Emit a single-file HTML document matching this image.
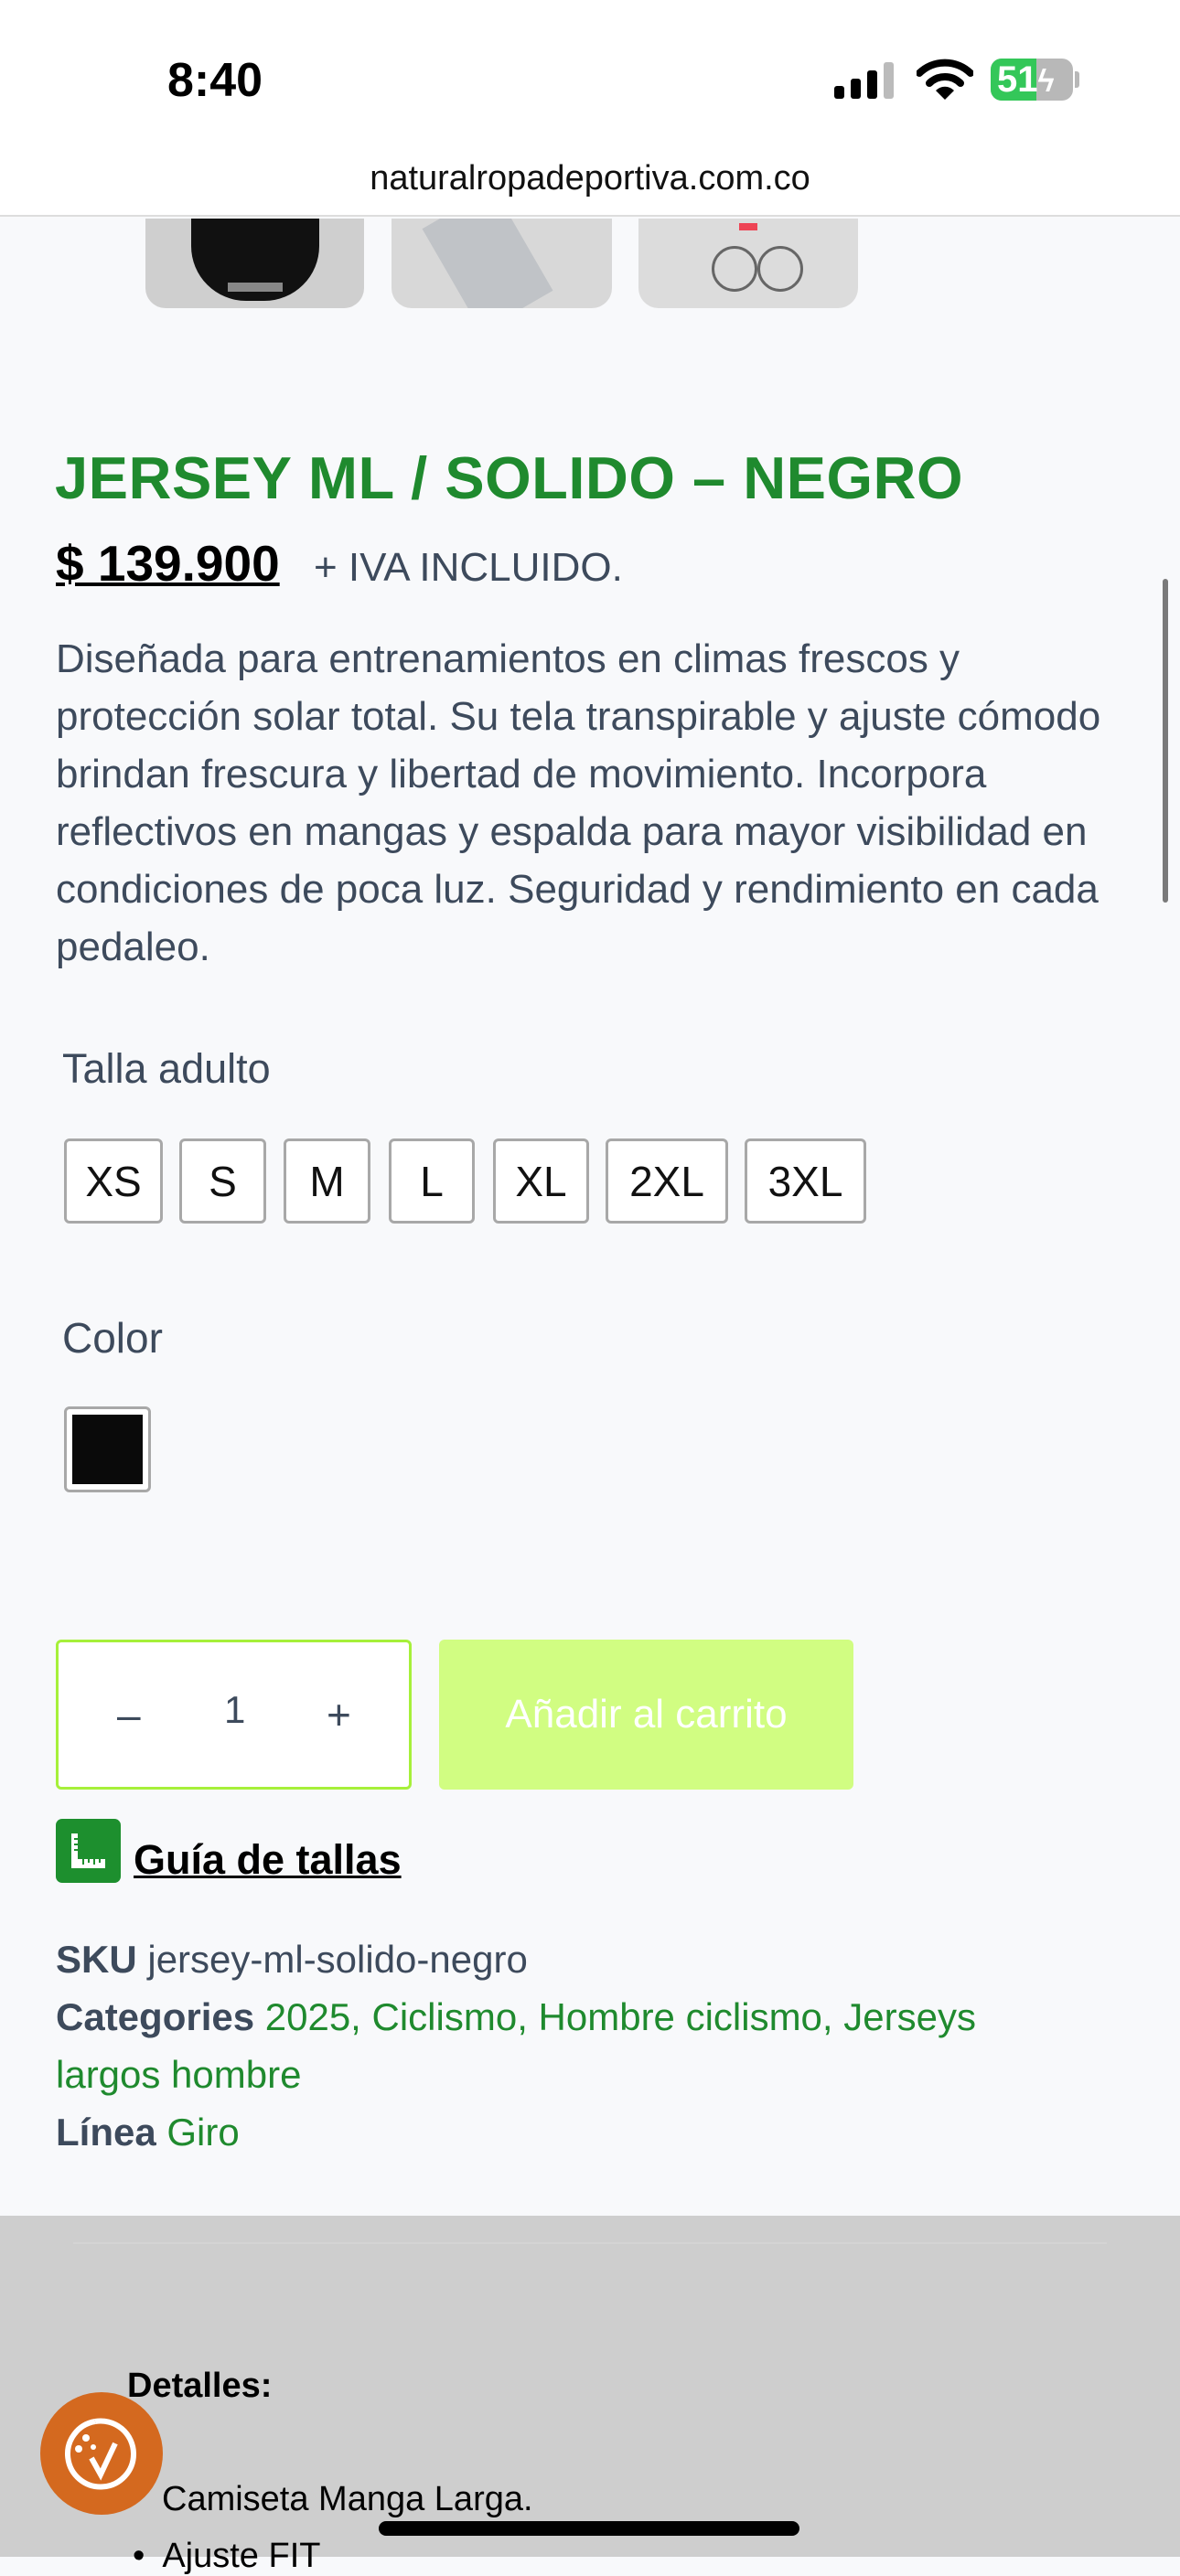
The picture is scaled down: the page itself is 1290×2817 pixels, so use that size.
<!DOCTYPE html>
<html><head><meta charset="utf-8"><style>
*{margin:0;padding:0;box-sizing:border-box}
body{width:1290px;height:2796px;overflow:hidden;background:#f8f9fb;font-family:"Liberation Sans",sans-serif;position:relative}
.a{position:absolute;white-space:nowrap}
.sz{position:absolute;top:1245px;height:93px;border:3px solid #a8a8a8;border-radius:6px;background:#fff;font-size:46px;color:#111;display:flex;align-items:center;justify-content:center}
.d{font-size:44px;color:#3d4a5c;left:61px}
.m{font-size:42px;color:#3d4a5c;left:61px}
.g{color:#1f8a2e}
</style></head><body>
<div class="a" style="left:0;top:0;width:1290px;height:237px;background:#fff;border-bottom:2px solid #ddd"></div>
<div class="a" style="left:183px;top:58px;font-size:52px;font-weight:bold;color:#000">8:40</div>
<svg class="a" style="left:912px;top:68px" width="70" height="40"><rect x="0" y="26" width="11" height="14" rx="3"/><rect x="18" y="18" width="11" height="22" rx="3"/><rect x="36" y="9" width="11" height="31" rx="3"/><rect x="54" y="0" width="11" height="40" rx="3" fill="#bbb"/></svg>
<svg class="a" style="left:1002px;top:64px" width="62" height="46" viewBox="0 0 62 46"><path d="M3 16 A40 40 0 0 1 59 16" stroke="#000" stroke-width="8" fill="none" stroke-linecap="round"/><path d="M14 27 A24 24 0 0 1 48 27" stroke="#000" stroke-width="8" fill="none" stroke-linecap="round"/><path d="M31 45 L21 35 A14 14 0 0 1 41 35 Z"/></svg>
<div class="a" style="left:1083px;top:64px;width:90px;height:46px;border-radius:12px;background:#b8b8b8;overflow:hidden"><div style="width:50px;height:46px;background:#34c759"></div></div>
<div class="a" style="left:1090px;top:64px;font-size:40px;font-weight:bold;color:#fff;line-height:46px">51<span style="font-size:34px">ϟ</span></div>
<div class="a" style="left:1175px;top:78px;width:5px;height:18px;background:#b8b8b8;border-radius:0 3px 3px 0"></div>
<div class="a" style="left:0;width:1290px;top:174px;text-align:center;font-size:38px;color:#111">naturalropadeportiva.com.co</div>

<div class="a" style="left:159px;top:239px;width:239px;height:98px;background:#cfcfcf;border-radius:0 0 22px 22px;overflow:hidden"><div style="position:absolute;left:50px;top:0;width:140px;height:90px;background:#111;border-radius:0 0 60px 60px"></div><div style="position:absolute;left:90px;top:70px;width:60px;height:10px;background:#888"></div></div>
<div class="a" style="left:428px;top:239px;width:241px;height:98px;background:#d8d8d8;border-radius:0 0 22px 22px;overflow:hidden"><div style="position:absolute;left:60px;top:-20px;width:90px;height:130px;background:#c0c3c7;transform:rotate(-30deg)"></div></div>
<div class="a" style="left:698px;top:239px;width:240px;height:98px;background:#dcdcdc;border-radius:0 0 22px 22px;overflow:hidden"><div style="position:absolute;left:80px;top:30px;width:50px;height:50px;border:3px solid #666;border-radius:50%"></div><div style="position:absolute;left:130px;top:30px;width:50px;height:50px;border:3px solid #666;border-radius:50%"></div><div style="position:absolute;left:110px;top:5px;width:20px;height:8px;background:#e45"></div></div>

<div class="a" style="left:60px;top:485px;font-size:65px;font-weight:bold;color:#1f8a2e;letter-spacing:0.5px">JERSEY ML / SOLIDO – NEGRO</div>
<div class="a" style="left:61px;top:584px;font-size:55px;font-weight:bold;color:#000;text-decoration:underline;text-decoration-thickness:4px">$ 139.900</div>
<div class="a" style="left:343px;top:596px;font-size:44px;color:#3d4a5c">+ IVA INCLUIDO.</div>

<div class="a d" style="top:696px">Diseñada para entrenamientos en climas frescos y</div>
<div class="a d" style="top:759px">protección solar total. Su tela transpirable y ajuste cómodo</div>
<div class="a d" style="top:822px">brindan frescura y libertad de movimiento. Incorpora</div>
<div class="a d" style="top:885px">reflectivos en mangas y espalda para mayor visibilidad en</div>
<div class="a d" style="top:948px">condiciones de poca luz. Seguridad y rendimiento en cada</div>
<div class="a d" style="top:1011px">pedaleo.</div>

<div class="a" style="left:68px;top:1143px;font-size:45px;color:#3d4a5c">Talla adulto</div>
<div class="sz" style="left:70px;width:108px">XS</div>
<div class="sz" style="left:196px;width:95px">S</div>
<div class="sz" style="left:310px;width:95px">M</div>
<div class="sz" style="left:425px;width:94px">L</div>
<div class="sz" style="left:539px;width:105px">XL</div>
<div class="sz" style="left:662px;width:134px">2XL</div>
<div class="sz" style="left:814px;width:133px">3XL</div>
<div class="a" style="left:68px;top:1436px;font-size:46px;color:#3d4a5c">Color</div>
<div class="a" style="left:70px;top:1538px;width:95px;height:94px;border:3px solid #a8a8a8;border-radius:6px;background:#fff;padding:6px"><div style="width:100%;height:100%;background:#0a0a0a"></div></div>

<div class="a" style="left:61px;top:1793px;width:389px;height:164px;border:3px solid #a6f03a;border-radius:6px;background:#fff"></div>
<div class="a" style="left:128px;top:1848px;font-size:46px;color:#3d4a5c">–</div>
<div class="a" style="left:245px;top:1846px;font-size:42px;color:#3d4a5c">1</div>
<div class="a" style="left:357px;top:1848px;font-size:46px;color:#3d4a5c">+</div>
<div class="a" style="left:480px;top:1793px;width:453px;height:164px;background:#d1fd82;border-radius:6px;color:#fff;font-size:44px;display:flex;align-items:center;justify-content:center">Añadir al carrito</div>

<div class="a" style="left:61px;top:1989px;width:71px;height:70px;background:#1d8f2e;border-radius:7px"></div>
<svg class="a" style="left:75px;top:2003px" width="44" height="44" viewBox="0 0 44 44"><path d="M3 2 H10 V30 H40 V40 H3 Z" fill="#fff"/><path d="M10 8 H6 M10 14 H6 M10 20 H6 M16 30 V36 M22 30 V34 M28 30 V36 M34 30 V34" stroke="#1d8f2e" stroke-width="2"/></svg>
<div class="a" style="left:146px;top:2008px;font-size:45px;font-weight:bold;color:#000;text-decoration:underline;text-decoration-thickness:3px">Guía de tallas</div>

<div class="a m" style="top:2119px"><b>SKU</b> jersey-ml-solido-negro</div>
<div class="a m" style="top:2182px"><b>Categories</b> <span class="g">2025, Ciclismo, Hombre ciclismo, Jerseys</span></div>
<div class="a m g" style="top:2245px">largos hombre</div>
<div class="a m" style="top:2308px"><b>Línea</b> <span class="g">Giro</span></div>

<div class="a" style="left:0;top:2423px;width:1290px;height:373px;background:#cecece"></div>
<div class="a" style="left:80px;top:2452px;width:1130px;height:2px;background:#d4d4d4"></div>
<div class="a" style="left:139px;top:2588px;font-size:38px;font-weight:bold;color:#000">Detalles:</div>
<div class="a" style="left:177px;top:2712px;font-size:38px;color:#000">Camiseta Manga Larga.</div>
<div class="a" style="left:145px;top:2774px;font-size:38px;color:#000">•&nbsp; Ajuste FIT</div>
<div class="a" style="left:44px;top:2616px;width:134px;height:134px;border-radius:50%;background:#d4691f"></div>
<svg class="a" style="left:64px;top:2636px" width="94" height="94" viewBox="0 0 94 94"><path d="M40 12 A36 36 0 1 0 82 47" stroke="#fff" stroke-width="6" fill="none"/><path d="M40 12 A36 36 0 0 1 82 47" stroke="#fff" stroke-width="6" fill="none"/><circle cx="30" cy="30" r="4" fill="#fff"/><circle cx="22" cy="42" r="4" fill="#fff"/><circle cx="38" cy="40" r="3" fill="#fff"/><path d="M36 52 L46 70 L62 36" stroke="#fff" stroke-width="6" fill="none"/></svg>
<div class="a" style="left:414px;top:2757px;width:460px;height:16px;background:#000;border-radius:8px"></div>
<div class="a" style="left:1271px;top:633px;width:6px;height:354px;background:#7a7a7a;border-radius:3px"></div>
</body></html>
